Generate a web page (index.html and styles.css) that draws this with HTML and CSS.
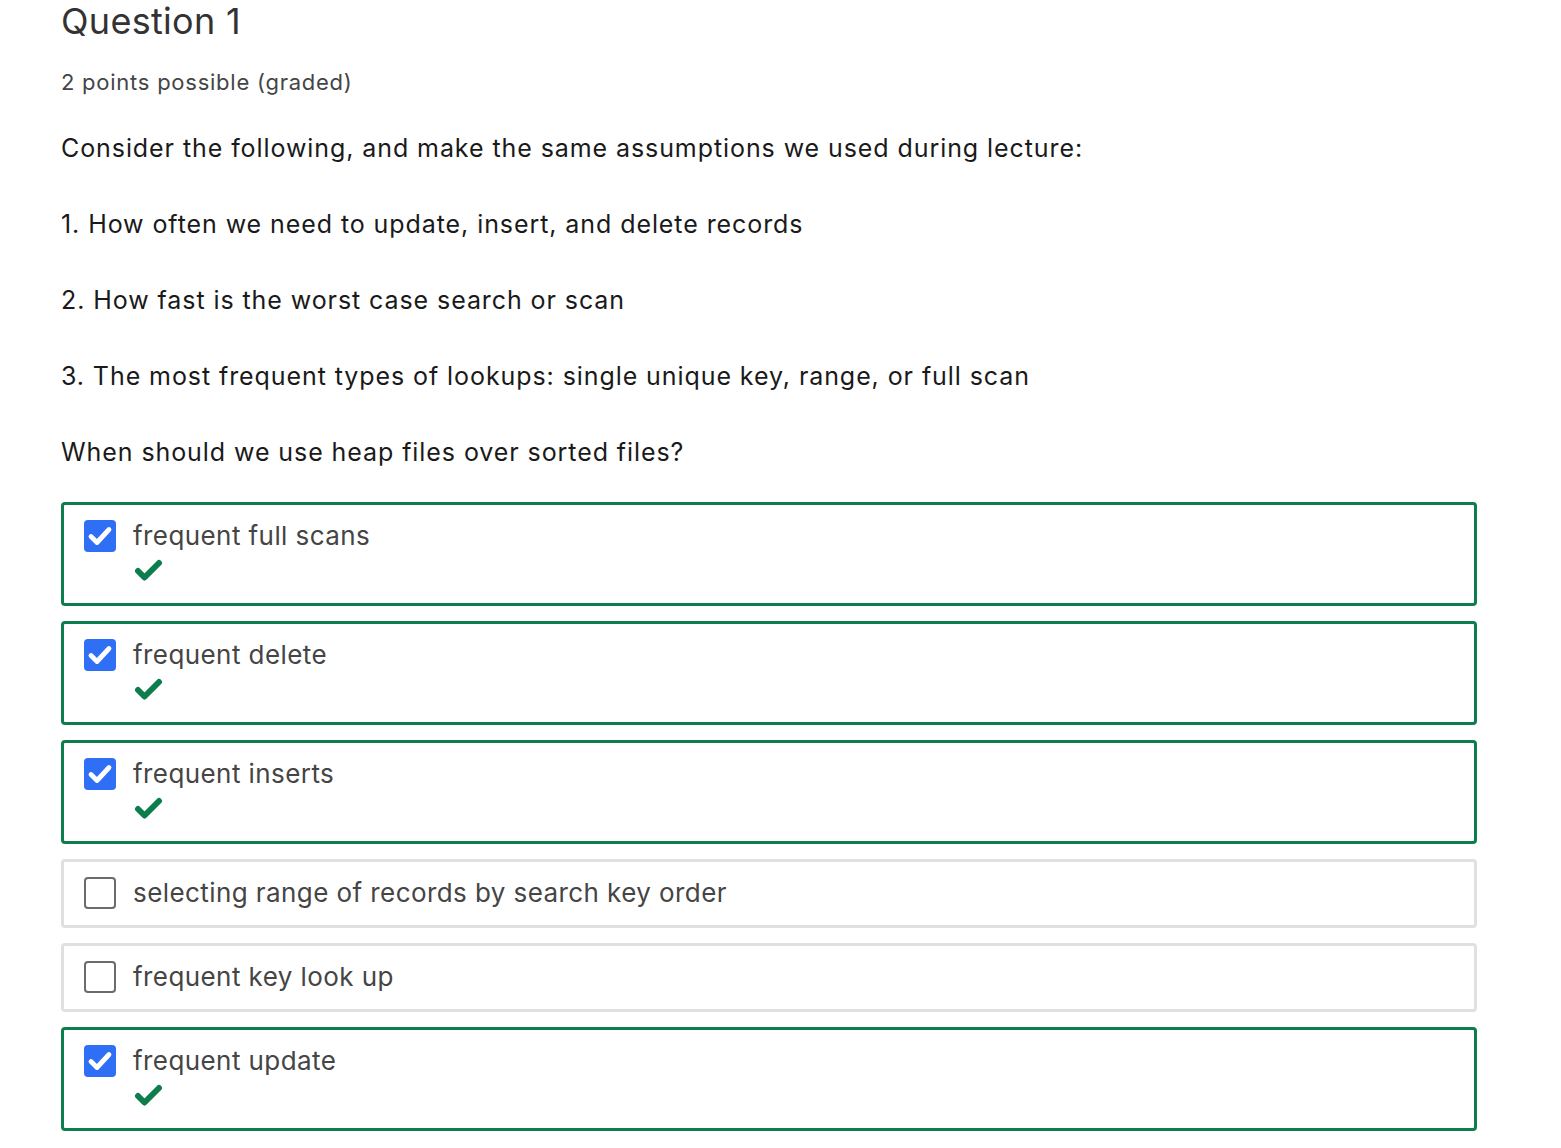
FILE: index.html
```html
<!DOCTYPE html>
<html>
<head>
<meta charset="utf-8">
<link rel="stylesheet" href="styles.css">
</head>
<body>
<div class="problem">
  <h2 class="title">Question 1</h2>
  <div class="points">2 points possible (graded)</div>
  <p class="para">Consider the following, and make the same assumptions we used during lecture:</p>
  <p class="para">1. How often we need to update, insert, and delete records</p>
  <p class="para">2. How fast is the worst case search or scan</p>
  <p class="para">3. The most frequent types of lookups: single unique key, range, or full scan</p>
  <p class="para">When should we use heap files over sorted files?</p>
  <div class="options">
    <div class="option correct">
      <span class="box checked"><svg viewBox="0 0 32 32" width="32" height="32"><polyline points="7,16.5 13,22.5 25,9.5" fill="none" stroke="#fff" stroke-width="4.8" stroke-linecap="round" stroke-linejoin="round"/></svg></span>
      <div class="label"><div class="text">frequent full scans</div><svg class="ok" viewBox="0 0 30 26" width="30" height="26"><polyline points="4,13 10.5,19.5 25,5" fill="none" stroke="#0d7d4d" stroke-width="6" stroke-linecap="round" stroke-linejoin="round"/></svg></div>
    </div>
    <div class="option correct">
      <span class="box checked"><svg viewBox="0 0 32 32" width="32" height="32"><polyline points="7,16.5 13,22.5 25,9.5" fill="none" stroke="#fff" stroke-width="4.8" stroke-linecap="round" stroke-linejoin="round"/></svg></span>
      <div class="label"><div class="text">frequent delete</div><svg class="ok" viewBox="0 0 30 26" width="30" height="26"><polyline points="4,13 10.5,19.5 25,5" fill="none" stroke="#0d7d4d" stroke-width="6" stroke-linecap="round" stroke-linejoin="round"/></svg></div>
    </div>
    <div class="option correct">
      <span class="box checked"><svg viewBox="0 0 32 32" width="32" height="32"><polyline points="7,16.5 13,22.5 25,9.5" fill="none" stroke="#fff" stroke-width="4.8" stroke-linecap="round" stroke-linejoin="round"/></svg></span>
      <div class="label"><div class="text">frequent inserts</div><svg class="ok" viewBox="0 0 30 26" width="30" height="26"><polyline points="4,13 10.5,19.5 25,5" fill="none" stroke="#0d7d4d" stroke-width="6" stroke-linecap="round" stroke-linejoin="round"/></svg></div>
    </div>
    <div class="option">
      <span class="box"></span>
      <div class="label"><div class="text">selecting range of records by search key order</div></div>
    </div>
    <div class="option">
      <span class="box"></span>
      <div class="label"><div class="text">frequent key look up</div></div>
    </div>
    <div class="option correct">
      <span class="box checked"><svg viewBox="0 0 32 32" width="32" height="32"><polyline points="7,16.5 13,22.5 25,9.5" fill="none" stroke="#fff" stroke-width="4.8" stroke-linecap="round" stroke-linejoin="round"/></svg></span>
      <div class="label"><div class="text">frequent update</div><svg class="ok" viewBox="0 0 30 26" width="30" height="26"><polyline points="4,13 10.5,19.5 25,5" fill="none" stroke="#0d7d4d" stroke-width="6" stroke-linecap="round" stroke-linejoin="round"/></svg></div>
    </div>
  </div>
</div>
</body>
</html>
```
FILE: styles.css
```css
html, body {
  margin: 0;
  padding: 0;
  background: #fff;
}
body {
  font-family: Inter, "Noto Sans", sans-serif;
}
.problem {
  padding-left: 61px;
  width: 1416px;
}
.title {
  margin: 0;
  font-size: 36px;
  font-weight: 400;
  line-height: 42px;
  color: #333;
  letter-spacing: 0.3px;
}
.points {
  margin-top: 24px;
  font-size: 22px;
  line-height: 32px;
  color: #454545;
  letter-spacing: 0.75px;
}
.para {
  margin: 0;
  margin-top: 36px;
  font-size: 25px;
  line-height: 40px;
  color: #1a1a1a;
  letter-spacing: 0.92px;
}
.points + .para {
  margin-top: 30px;
}
.options {
  margin-top: 30px;
  display: flex;
  flex-direction: column;
  gap: 15px;
}
.option {
  display: flex;
  align-items: flex-start;
  border: 3px solid #e0e0e0;
  border-radius: 4px;
  padding: 14px 20px 15px 20px;
}
.option.correct {
  border-color: #0d7d4d;
  padding-bottom: 19px;
}
.box {
  flex: none;
  width: 32px;
  height: 32px;
  box-sizing: border-box;
  border: 2px solid #6b6b6b;
  border-radius: 4px;
  margin-top: 1px;
  background: #fff;
}
.box.checked {
  border: none;
  background: #2f6ff6;
}
.box svg {
  display: block;
}
.label {
  margin-left: 17px;
  display: flex;
  flex-direction: column;
}
.text {
  font-size: 26px;
  line-height: 34px;
  color: #454545;
  letter-spacing: 0.42px;
}
.ok {
  display: block;
  margin-top: 5px;
  margin-left: 1px;
}
```
